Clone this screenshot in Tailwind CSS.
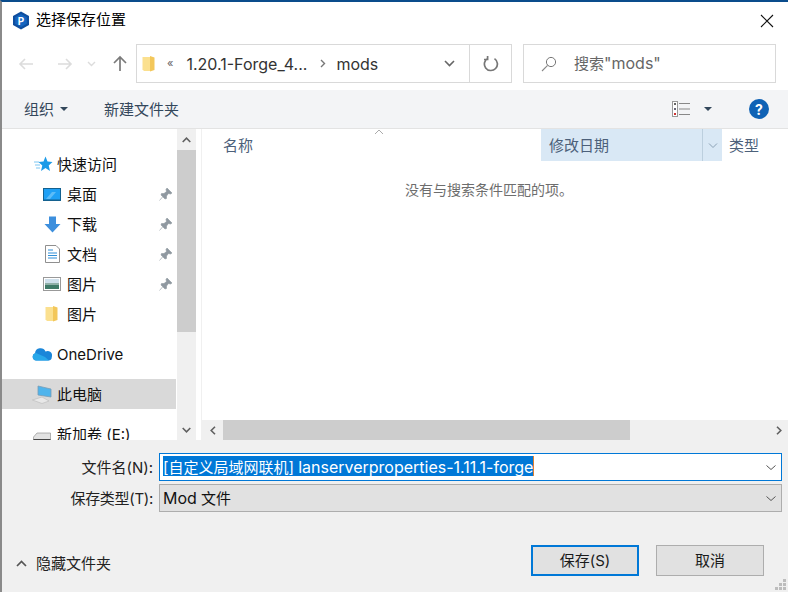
<!DOCTYPE html>
<html lang="zh-CN">
<head>
    <meta charset="UTF-8">
    <title>选择保存位置</title>
    <script src="https://cdn.jsdelivr.net/npm/@tailwindcss/browser@4"></script>
</head>
<body class="bg-white font-['Inter','Noto_Sans_CJK_SC',sans-serif] text-[15px] text-[#1a1a1a] overflow-hidden">
<div class="w-[788px] h-[592px] flex flex-col border-t-2 border-t-[#0a4c8c] border-l-2 border-l-[#8a8a8a] overflow-hidden">

    <!-- Title bar -->
    <div class="h-[42px] shrink-0 flex items-center pl-[10px] pr-[14px] pb-[5px]">
        <svg class="w-[18px] h-[19px]" viewBox="0 0 18 19"><path d="M9 0.5 L17 5 V14 L9 18.5 L1 14 V5 Z" fill="#0f4e9e"/><path d="M9 3 L14.8 6.3 V12.7 L9 16 L3.2 12.7 V6.3 Z" fill="#1565c0"/><text x="9" y="13.5" font-size="10" font-weight="700" text-anchor="middle" fill="#fff">P</text></svg>
        <span class="ml-[6px] text-black">选择保存位置</span>
        <svg class="ml-auto w-[14px] h-[14px]" viewBox="0 0 14 14"><path d="M1 1 L13 13 M13 1 L1 13" stroke="#111" stroke-width="1.1"/></svg>
    </div>

    <!-- Navigation row -->
    <div class="h-[39px] shrink-0 flex items-center">
        <div class="w-[134px] shrink-0 flex items-center">
            <svg class="ml-[16px] w-[16px] h-[14px]" viewBox="0 0 16 14"><path d="M15 7 H2 M7 2 L2 7 L7 12" fill="none" stroke="#dcdcdc" stroke-width="1.6"/></svg>
            <svg class="ml-[23px] w-[16px] h-[14px]" viewBox="0 0 16 14"><path d="M1 7 H14 M9 2 L14 7 L9 12" fill="none" stroke="#dcdcdc" stroke-width="1.6"/></svg>
            <svg class="ml-[14px] w-[9px] h-[6px]" viewBox="0 0 9 6"><path d="M1 1 L4.5 4.5 L8 1" fill="none" stroke="#dcdcdc" stroke-width="1.4"/></svg>
            <svg class="ml-[17px] w-[14px] h-[17px]" viewBox="0 0 14 17"><path d="M7 16 V2 M1 8 L7 2 L13 8" fill="none" stroke="#7a7a7a" stroke-width="1.7"/></svg>
        </div>
        <div class="w-[376px] h-[39px] shrink-0 border border-[#d9d9d9] flex items-center">
            <svg class="ml-[5px] w-[13px] h-[16px]" viewBox="0 0 13 16"><path d="M0.5 1 H8 V15 H2 L0.5 13.5 Z" fill="#fbe08f"/><path d="M8 0 L12.5 1.5 V14 L8 15.5 Z" fill="#f3c75a"/></svg>
            <span class="ml-[12px] text-[11px] text-[#666]">«</span>
            <span class="ml-[13px] text-[16px] text-[#333]">1.20.1-Forge_4...</span>
            <svg class="ml-[13px] w-[6px] h-[9px]" viewBox="0 0 6 9"><path d="M1 1 L4.5 4.5 L1 8" fill="none" stroke="#777" stroke-width="1.4"/></svg>
            <span class="ml-[10px] text-[16px] text-[#333]">mods</span>
            <svg class="ml-auto mr-[14px] w-[11px] h-[7px]" viewBox="0 0 11 7"><path d="M1 1 L5.5 5.5 L10 1" fill="none" stroke="#666" stroke-width="1.6"/></svg>
            <div class="w-[42px] h-full border-l border-[#d9d9d9] flex items-center justify-center shrink-0">
                <svg class="w-[16px] h-[16px]" viewBox="0 0 16 16"><path d="M5 2.2 A6.5 6.5 0 1 0 11.5 2.6 M4.6 0 V3.5 H1" fill="none" stroke="#777" stroke-width="1.7"/></svg>
            </div>
        </div>
        <div class="ml-[11px] w-[253px] h-[39px] shrink-0 border border-[#d9d9d9] flex items-center">
            <svg class="ml-[17px] w-[16px] h-[16px]" viewBox="0 0 16 16"><circle cx="10" cy="6" r="4.6" fill="none" stroke="#777"/><path d="M6.6 9.4 L1 15" stroke="#888" stroke-width="1.1"/></svg>
            <span class="ml-[17px] text-[#666]">搜索<span class="text-[16px]">"mods"</span></span>
        </div>
    </div>

    <!-- Toolbar -->
    <div class="h-[39px] mt-[7px] shrink-0 bg-[#f3f4f6] border-b border-[#e3e3e3] flex items-center text-[#33475b] [&>span]:pt-[2px]">
        <span class="ml-[22px]">组织</span>
        <svg class="ml-[6px] w-[8px] h-[4px]" viewBox="0 0 8 4"><path d="M0 0 H8 L4 4 Z" fill="#33475b"/></svg>
        <span class="ml-[36px]">新建文件夹</span>
        <svg class="ml-auto w-[19px] h-[16px]" viewBox="0 0 19 16"><rect x="0.5" y="0.5" width="5" height="15" fill="#fff" stroke="#999"/><rect x="2" y="2" width="2" height="2" fill="#666"/><rect x="2" y="7" width="2" height="2" fill="#667"/><rect x="2" y="12" width="2" height="2" fill="#c33"/><path d="M7 2.5 H18 M7 8 H18 M7 13.5 H18" stroke="#888"/></svg>
        <svg class="ml-[13px] w-[8px] h-[4px]" viewBox="0 0 8 4"><path d="M0 0 H8 L4 4 Z" fill="#33475b"/></svg>
        <div class="ml-[37px] mr-[19px] w-[20px] h-[20px] rounded-full bg-[#0f62b5] text-white text-[14px] font-bold flex items-center justify-center">?</div>
    </div>

    <!-- Main area -->
    <div class="h-[311px] shrink-0 flex">
        <!-- Sidebar -->
        <div class="w-[175px] shrink-0 pt-[20px] overflow-hidden text-[#111] [&_span]:pt-[2px]">
            <div class="h-[30px] flex items-center pl-[32px]">
                <svg class="w-[19px] h-[16px]" viewBox="0 0 19 16"><path d="M11.5 0.5 L13.5 5.5 L18.5 6 L14.7 9.4 L16 15 L11.5 12 L7 15 L8.3 9.4 L4.5 6 L9.5 5.5 Z" fill="#1c9be8"/><path d="M0 6 H5 M1 9 H6 M2 12 H6" stroke="#7cc6f2"/></svg>
                <span class="ml-[4px]">快速访问</span>
            </div>
            <div class="h-[30px] flex items-center pl-[41px]">
                <svg class="w-[18px] h-[13px]" viewBox="0 0 18 13"><rect width="18" height="13" fill="#14618f"/><rect x="1" y="1" width="16" height="10.5" fill="#1fa0f5"/><path d="M3 11 L9 4 H13 L7 11 Z" fill="#5cbcf8"/></svg>
                <span class="ml-[6px]">桌面</span>
                <svg class="ml-auto mr-[5px] w-[13px] h-[13px]" viewBox="0 0 13 13"><path d="M8 0 L13 5 L11.5 6 L9.5 5.5 L7.5 8 L7.5 10.5 L6 11 L2 7 L2.5 5.5 L5 5.5 L7.5 3.5 L7 1.5 Z M3.5 9 L0.5 12.5" fill="#8f98a0" stroke="#8f98a0" stroke-width="0.6"/></svg>
            </div>
            <div class="h-[30px] flex items-center pl-[42px]">
                <svg class="w-[17px] h-[17px]" viewBox="0 0 17 17"><path d="M5 0.5 H12 V8 H16.5 L8.5 16.5 L0.5 8 H5 Z" fill="#3d8fdd"/></svg>
                <span class="ml-[6px]">下载</span>
                <svg class="ml-auto mr-[5px] w-[13px] h-[13px]" viewBox="0 0 13 13"><path d="M8 0 L13 5 L11.5 6 L9.5 5.5 L7.5 8 L7.5 10.5 L6 11 L2 7 L2.5 5.5 L5 5.5 L7.5 3.5 L7 1.5 Z M3.5 9 L0.5 12.5" fill="#8f98a0" stroke="#8f98a0" stroke-width="0.6"/></svg>
            </div>
            <div class="h-[30px] flex items-center pl-[43px]">
                <svg class="w-[15px] h-[18px]" viewBox="0 0 15 18"><path d="M0.5 0.5 H11 L14.5 4 V17.5 H0.5 Z" fill="#fff" stroke="#8f8f8f"/><path d="M3 5 H8 M3 8 H12 M3 10.5 H12 M3 13 H12" stroke="#2e8fd8"/></svg>
                <span class="ml-[7px]">文档</span>
                <svg class="ml-auto mr-[5px] w-[13px] h-[13px]" viewBox="0 0 13 13"><path d="M8 0 L13 5 L11.5 6 L9.5 5.5 L7.5 8 L7.5 10.5 L6 11 L2 7 L2.5 5.5 L5 5.5 L7.5 3.5 L7 1.5 Z M3.5 9 L0.5 12.5" fill="#8f98a0" stroke="#8f98a0" stroke-width="0.6"/></svg>
            </div>
            <div class="h-[30px] flex items-center pl-[41px]">
                <svg class="w-[18px] h-[14px]" viewBox="0 0 18 14"><rect x="0.5" y="0.5" width="17" height="13" fill="#fff" stroke="#999"/><rect x="2" y="2" width="14" height="5" fill="#cfe0ec"/><rect x="2" y="6" width="14" height="2" fill="#8fb0a8"/><rect x="2" y="8" width="14" height="4" fill="#3f7a68"/></svg>
                <span class="ml-[6px]">图片</span>
                <svg class="ml-auto mr-[5px] w-[13px] h-[13px]" viewBox="0 0 13 13"><path d="M8 0 L13 5 L11.5 6 L9.5 5.5 L7.5 8 L7.5 10.5 L6 11 L2 7 L2.5 5.5 L5 5.5 L7.5 3.5 L7 1.5 Z M3.5 9 L0.5 12.5" fill="#8f98a0" stroke="#8f98a0" stroke-width="0.6"/></svg>
            </div>
            <div class="h-[30px] flex items-center pl-[43px]">
                <svg class="w-[13px] h-[16px]" viewBox="0 0 13 16"><path d="M0.5 1 H8 V15 H2 L0.5 13.5 Z" fill="#fbe08f"/><path d="M8 0 L12.5 1.5 V14 L8 15.5 Z" fill="#f3c75a"/></svg>
                <span class="ml-[9px]">图片</span>
            </div>
            <div class="h-[30px] mt-[10px] flex items-center pl-[30px]">
                <svg class="w-[20px] h-[14px]" viewBox="0 0 20 14"><path d="M4 13.5 A3.8 3.8 0 0 1 3 6.2 A5.5 5.5 0 0 1 13.5 4.5 A4.5 4.5 0 0 1 19.8 10 A3.5 3.5 0 0 1 16.5 13.5 Z" fill="#1a86d9"/><path d="M4 13.5 A3.8 3.8 0 0 1 4 6 L13 10 L17 13.5 Z" fill="#28a8ea"/></svg>
                <span class="ml-[5px]">OneDrive</span>
            </div>
            <div class="h-[30px] mt-[10px] mr-[1px] flex items-center pl-[30px] bg-[#d9d9d9]">
                <svg class="w-[21px] h-[19px]" viewBox="0 0 21 19"><path d="M6 1 L19 4 V12 L6 10 Z" fill="#4fb4ec" stroke="#7a9db5" stroke-width="0.8"/><path d="M0.5 15 L10 12 L17 16 L10 18.5 Z" fill="#e8e8e8" stroke="#bbb" stroke-width="0.6"/></svg>
                <span class="ml-[4px]">此电脑</span>
            </div>
            <div class="h-[30px] mt-[10px] flex items-center pl-[31px]">
                <svg class="w-[18px] h-[14px] mt-[10px]" viewBox="0 0 18 14"><path d="M0.5 5 L4 1 H17.5 V11 H0.5 Z" fill="#e2e2e2" stroke="#888" stroke-width="0.6"/><rect x="0.5" y="7" width="17" height="5" fill="#444"/></svg>
                <span class="ml-[6px]">新加卷 (E:)</span>
            </div>
        </div>

        <!-- Sidebar scrollbar -->
        <div class="w-[19px] shrink-0 bg-[#f0f0f0] flex flex-col">
            <div class="h-[21px] flex items-center justify-center">
                <svg class="w-[9px] h-[6px]" viewBox="0 0 9 6"><path d="M0.7 5 L4.5 1.2 L8.3 5" fill="none" stroke="#606060" stroke-width="1.6"/></svg>
            </div>
            <div class="h-[182px] bg-[#cdcdcd]"></div>
            <div class="mt-auto h-[20px] flex items-center justify-center">
                <svg class="w-[9px] h-[6px]" viewBox="0 0 9 6"><path d="M0.7 1 L4.5 4.8 L8.3 1" fill="none" stroke="#606060" stroke-width="1.6"/></svg>
            </div>
        </div>

        <!-- File list -->
        <div class="ml-[5px] w-[587px] shrink-0 flex flex-col border-l border-[#f0f0f0]">
            <div class="h-[32px] flex items-center relative text-[#4c607a]">
                <span class="w-[30px] ml-[21px] pt-[2px]">名称</span>
                <svg class="absolute left-[172px] top-0 w-[10px] h-[6px]" viewBox="0 0 10 6"><path d="M1 5 L5 1 L9 5" fill="none" stroke="#aaa"/></svg>
                <div class="ml-[288px] w-[162px] h-full bg-[#d9e8f5] border-r border-[#bccfde] flex items-center pl-[8px] pt-[2px]">修改日期</div>
                <div class="w-[19px] h-full bg-[#d9e8f5] flex items-center justify-center">
                    <svg class="w-[10px] h-[5px]" viewBox="0 0 10 5"><path d="M1 0.5 L5 4.5 L9 0.5" fill="none" stroke="#8aa0b4"/></svg>
                </div>
                <span class="ml-[7px] shrink-0 pt-[2px]">类型</span>
            </div>
            <div class="flex-1 pt-[18px] pl-[203px] text-[#6d6d6d] text-[14px]">没有与搜索条件匹配的项。</div>
            <!-- Horizontal scrollbar -->
            <div class="h-[20px] shrink-0 bg-[#f0f0f0] flex items-center">
                <div class="w-[21px] h-full flex items-center justify-center">
                    <svg class="w-[6px] h-[9px]" viewBox="0 0 6 9"><path d="M5 0.7 L1.2 4.5 L5 8.3" fill="none" stroke="#606060" stroke-width="1.6"/></svg>
                </div>
                <div class="w-[407px] h-full bg-[#cdcdcd]"></div>
                <svg class="ml-auto mr-[6px] w-[6px] h-[9px]" viewBox="0 0 6 9"><path d="M1 0.7 L4.8 4.5 L1 8.3" fill="none" stroke="#606060" stroke-width="1.6"/></svg>
            </div>
        </div>
    </div>

    <!-- Footer -->
    <div class="flex-1 bg-[#f0f0f0] relative pt-[13px]">
        <div class="flex items-center h-[28px]">
            <div class="w-[151px] text-right text-[#222] pt-[2px]">文件名(N):</div>
            <div class="ml-[6px] w-[623px] h-[28px] bg-white border border-[#0078d7] flex items-center pl-[3px]">
                <span class="h-[20px] -mt-[2px] bg-[#0078d7] text-white leading-[22px] border-r border-r-[#e08030]">[自定义局域网联机] <span class="text-[16px]">lanserverproperties-1.11.1-forge</span></span>
                <svg class="ml-auto mr-[5px] w-[10px] h-[5px]" viewBox="0 0 10 5"><path d="M0.5 0.5 L5 4.5 L9.5 0.5" fill="none" stroke="#555"/></svg>
            </div>
        </div>
        <div class="flex items-center h-[28px] mt-[3px]">
            <div class="w-[151px] text-right text-[#222] pt-[2px] tracking-[-0.3px]">保存类型(T):</div>
            <div class="ml-[6px] w-[623px] h-[28px] bg-[#e1e1e1] border border-[#adadad] flex items-center pl-[3px] text-[#111]">
                <span><span class="text-[16px]">Mod</span> 文件</span>
                <svg class="ml-auto mr-[5px] w-[10px] h-[5px]" viewBox="0 0 10 5"><path d="M0.5 0.5 L5 4.5 L9.5 0.5" fill="none" stroke="#555"/></svg>
            </div>
        </div>
        <div class="flex items-center mt-[33px] h-[31px]">
            <svg class="ml-[14px] w-[11px] h-[7px] mt-[5px]" viewBox="0 0 11 7"><path d="M1 6 L5.5 1.5 L10 6" fill="none" stroke="#555" stroke-width="1.7"/></svg>
            <span class="ml-[9px] mt-[7px] text-[#222]">隐藏文件夹</span>
            <div class="ml-auto w-[108px] h-[31px] bg-[#e1e1e1] border-2 border-[#0078d7] flex items-center justify-center pt-[2px]">保存(S)</div>
            <div class="ml-[17px] mr-[24px] w-[108px] h-[31px] bg-[#e1e1e1] border border-[#adadad] flex items-center justify-center pt-[2px]">取消</div>
        </div>
        <svg class="absolute right-[2px] bottom-[2px] w-[11px] h-[11px]" viewBox="0 0 11 11"><path d="M8 0h3v3H8zM4 4h3v3H4zM8 4h3v3H8zM0 8h3v3H0zM4 8h3v3H4zM8 8h3v3H8z" fill="#bdbdbd"/></svg>
    </div>
</div>
</body>
</html>
